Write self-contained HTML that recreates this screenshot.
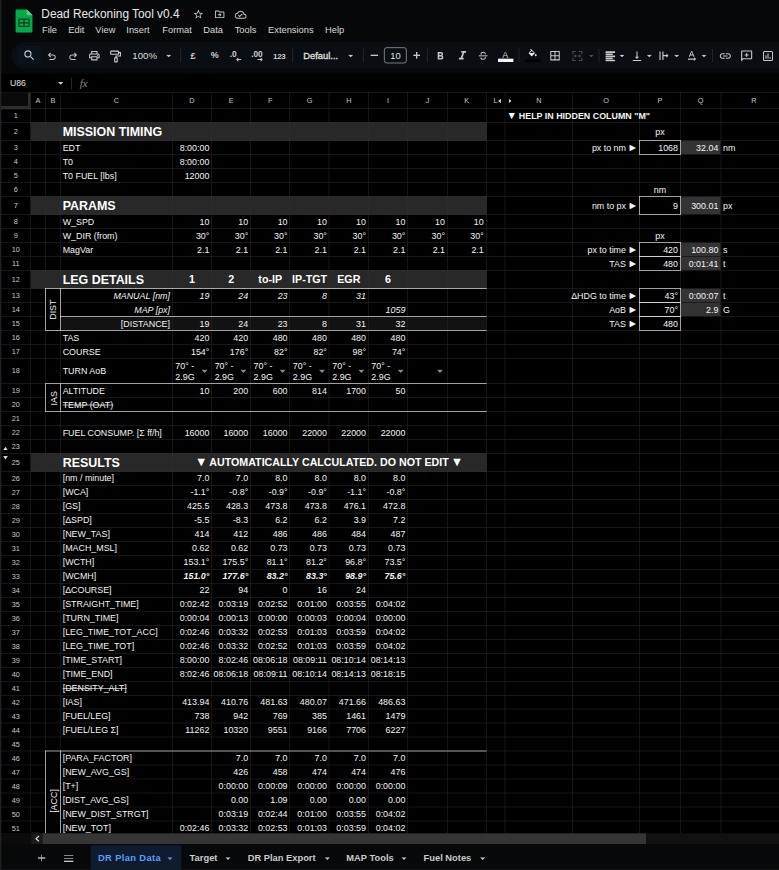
<!DOCTYPE html>
<html lang="en"><head><meta charset="utf-8"><title>Dead Reckoning Tool v0.4</title>
<style>
html,body{margin:0;padding:0;background:#000;}
body{width:779px;height:870px;overflow:hidden;position:relative;font-family:"Liberation Sans","DejaVu Sans",sans-serif;}
#page{position:absolute;left:0;top:0;width:1169px;height:1305px;transform:scale(0.6666667);transform-origin:0 0;background:#000;overflow:hidden;color:#f0f0f0;}
#page div,#page svg{position:absolute;box-sizing:border-box;}
#page span{white-space:nowrap;}
#top{left:0;top:0;width:1169px;height:111px;background:#060709;}
#pill{left:17px;top:63px;width:1200px;height:40px;background:#0a0d11;border-radius:20px 0 0 20px;}
#sbox{left:26px;top:69px;width:37px;height:27px;background:#0a121b;border-radius:3px;}
.t{color:#c9ccca;font-size:14px;line-height:20px;height:20px;}
.sep{width:1px;background:#2e3236;top:73px;height:20px;}
#title{left:62px;top:9.400px;font-size:17.800px;line-height:24px;color:#e6e8e7;}
.m{top:34.500px;font-size:14px;line-height:20px;color:#d6d9d7;}
#fbar{left:0;top:111px;width:1169px;height:27px;background:#000;}
#grid{left:0;top:0;width:1169px;height:1250px;overflow:hidden;}
.r{}
.c{display:flex;align-items:flex-end;padding:0 3px 1.700px 3px;font-size:13.333px;line-height:15px;color:#f3f3f3;overflow:visible;}
.c.ar{justify-content:flex-end;}
.c.al{justify-content:flex-start;}
.c.ac{justify-content:center;}
.c.mid{align-items:center;padding-bottom:0;}
.c.mid2{align-items:center;padding-bottom:0;padding-top:1px;}
.g{font-size:1.18em;line-height:0;margin-left:-1.500px;margin-right:-0.900px;}
.g2{font-size:1.2em;line-height:0;margin-left:-1.500px;margin-right:-1px;}
.c.big{font-size:18.667px;font-weight:bold;line-height:21px;padding-bottom:2px;color:#fff;}
.c.b12{font-size:16px;font-weight:bold;line-height:18px;padding-bottom:3px;color:#fff;}
.c.b{font-weight:bold;}
.c.i{font-style:italic;}
.c.bi{font-style:italic;font-weight:bold;}
.c.st span{text-decoration:line-through;}
.dd{font-size:13.333px;line-height:16.5px;color:#f3f3f3;padding:3px 0 0 4px;}
.ch{display:flex;align-items:center;justify-content:center;font-size:11px;color:#c8c8c8;}
.rh{left:1.100px;width:45px;display:flex;align-items:center;justify-content:center;font-size:11px;color:#c8c8c8;}
.rot{display:flex;align-items:center;justify-content:center;font-size:13.333px;color:#f3f3f3;}
.rot span{transform:rotate(-90deg);display:block;}
.abs{}
#hs{left:0;top:1250px;width:1169px;height:16px;background:#111;}
#bot{left:0;top:1266px;width:1169px;height:39px;background:#07080a;}
.tab{top:1277px;font-size:14px;line-height:20px;font-weight:bold;color:#c9ccca;}
#lb{left:0;top:0;width:1.5px;height:1305px;background:#222;}
#bb{left:0;top:1303.5px;width:1169px;height:1.5px;background:#1a1a1a;}

</style></head><body>
<div id="page">
<div id="top"></div>
<svg style="left:22.5px;top:13.5px" width="26" height="35" viewBox="0 0 26 35">
<path d="M2.5 0H17l9 9v23.5a2.5 2.5 0 0 1-2.500 2.500h-21A2.500 2.500 0 0 1 0 32.500v-30A2.500 2.500 0 0 1 2.500 0z" fill="#00ab48"/>
<path d="M17 0l9 9h-6.500A2.500 2.500 0 0 1 17 6.500z" fill="#57cf8a"/>
<rect x="4.500" y="14" width="17" height="12.500" fill="#04381c"/>
<rect x="6.300" y="15.800" width="5.700" height="3.600" fill="#00ab48"/><rect x="14" y="15.800" width="5.700" height="3.600" fill="#00ab48"/>
<rect x="6.300" y="21.200" width="5.700" height="3.600" fill="#00ab48"/><rect x="14" y="21.200" width="5.700" height="3.600" fill="#00ab48"/>
</svg>
<div id="title"><span>Dead Reckoning Tool v0.4</span></div>
<svg style="left:289.00px;top:13.00px" width="17" height="17" viewBox="0 0 24 24" ><path d="M22 9.240l-7.190-.62L12 2 9.190 8.630 2 9.240l5.460 4.730L5.820 21 12 17.270 18.180 21l-1.630-7.030L22 9.240zM12 15.400l-3.760 2.270 1-4.280-3.320-2.880 4.380-.38L12 6.100l1.710 4.040 4.380.38-3.320 2.880 1 4.280L12 15.400z" fill="#c6c9c7"/></svg>
<svg style="left:320.50px;top:12.50px" width="17" height="17" viewBox="0 0 24 24" ><path d="M20 6h-8l-2-2H4c-1.100 0-1.990.9-1.990 2L2 18c0 1.100.9 2 2 2h16c1.100 0 2-.9 2-2V8c0-1.100-.9-2-2-2zm0 12H4V6h5.170l2 2H20v10zm-8-1l4-4-4-4v3H8v2h4v3z" fill="#c6c9c7"/></svg>
<svg style="left:352.00px;top:12.50px" width="18" height="18" viewBox="0 0 24 24" ><path d="M19.350 10.040C18.670 6.590 15.640 4 12 4 9.110 4 6.600 5.640 5.350 8.040 2.340 8.360 0 10.910 0 14c0 3.310 2.690 6 6 6h13c2.760 0 5-2.240 5-5 0-2.640-2.050-4.780-4.650-4.960zM19 18H6c-2.210 0-4-1.790-4-4 0-2.050 1.530-3.760 3.560-3.970l1.070-.11.5-.95C8.080 7.140 9.940 6 12 6c2.620 0 4.880 1.860 5.390 4.430l.3 1.500 1.530.11c1.560.1 2.780 1.410 2.780 2.960 0 1.650-1.350 3-3 3zm-9-3.820l-2.090-2.090L6.500 13.500 10 17l6.010-6.010-1.410-1.410z" fill="#c6c9c7"/></svg>
<div class="m" style="left:63px"><span>File</span></div>
<div class="m" style="left:102.5px"><span>Edit</span></div>
<div class="m" style="left:143px"><span>View</span></div>
<div class="m" style="left:189.5px"><span>Insert</span></div>
<div class="m" style="left:243.5px"><span>Format</span></div>
<div class="m" style="left:305px"><span>Data</span></div>
<div class="m" style="left:352px"><span>Tools</span></div>
<div class="m" style="left:402px"><span>Extensions</span></div>
<div class="m" style="left:487.5px"><span>Help</span></div>
<div id="pill"></div><div id="sbox"></div>
<svg style="left:34.20px;top:73.30px" width="20" height="20" viewBox="0 0 24 24" ><path d="M15.5 14h-.79l-.28-.27A6.471 6.471 0 0 0 16 9.500 6.500 6.500 0 1 0 9.500 16c1.610 0 3.090-.59 4.230-1.570l.27.28v.79l5 4.990L20.490 19l-4.990-5zm-6 0C7.010 14 5 11.990 5 9.500S7.010 5 9.500 5 14 7.010 14 9.500 11.990 14 9.500 14z" fill="#c6c9c7"/></svg>
<svg style="left:69.25px;top:75.65px" width="17.5" height="17.5" viewBox="0 0 24 24" ><path d="M7 19v-2h7.100c1.050 0 1.960-.33 2.740-1 .77-.67 1.160-1.500 1.160-2.500s-.39-1.830-1.160-2.500c-.78-.67-1.690-1-2.740-1H7.800l2.600 2.600L9 14 4 9l5-5 1.400 1.400L7.800 8h6.300c1.620 0 3 .52 4.160 1.570C19.420 10.620 20 11.930 20 13.500s-.58 2.880-1.740 3.930C17.100 18.480 15.720 19 14.100 19H7z" fill="#c6c9c7"/></svg>
<svg style="left:100.75px;top:75.65px" width="17.5" height="17.5" viewBox="0 0 24 24" ><g transform="translate(24,0) scale(-1,1)"><path d="M7 19v-2h7.100c1.050 0 1.960-.33 2.740-1 .77-.67 1.160-1.500 1.160-2.500s-.39-1.830-1.160-2.500c-.78-.67-1.690-1-2.740-1H7.800l2.600 2.600L9 14 4 9l5-5 1.400 1.400L7.800 8h6.300c1.620 0 3 .52 4.160 1.570C19.420 10.620 20 11.930 20 13.500s-.58 2.880-1.740 3.930C17.100 18.480 15.720 19 14.100 19H7z" fill="#c6c9c7"/></g></svg>
<svg style="left:132.25px;top:73.50px" width="19" height="19" viewBox="0 0 24 24" ><path d="M19 8h-1V3H6v5H5c-1.660 0-3 1.340-3 3v6h4v4h12v-4h4v-6c0-1.660-1.340-3-3-3zM8 5h8v3H8V5zm8 14H8v-4h8v4zm2-4v-2H6v2H4v-4c0-.55.45-1 1-1h14c.55 0 1 .45 1 1v4h-2zm0-2.500a1 1 0 1 0 0-2 1 1 0 0 0 0 2z" fill="#c6c9c7"/></svg>
<svg style="left:162.500px;top:74px" width="21" height="21" viewBox="0 0 24 24" fill="none" stroke="#c6c9c7" stroke-width="1.900"><rect x="3.500" y="3" width="13.500" height="5.500" rx="0.800"/><path d="M17 5.700h3.200v5.800h-7.700v3.200"/><rect x="10.300" y="14.700" width="4.400" height="6.800" rx="0.600"/></svg>
<div class="t" style="left:198.50px;top:73.00px;font-size:14.500px;color:#dcdfdd;"><span>100%</span></div>
<svg style="left:249.00px;top:81.50px" width="8" height="4" viewBox="0 0 10 5"><path d="M0 0h10L5 5z" fill="#c6c9c7"/></svg>
<div class="sep" style="left:270.25px"></div>
<div class="t" style="left:285.80px;top:73.00px;font-weight:bold;font-size:14px;"><span>£</span></div>
<div class="t" style="left:316.30px;top:73.00px;font-weight:bold;font-size:13.5px;"><span>%</span></div>
<div class="t" style="left:344.50px;top:71.50px;font-size:12.500px;font-weight:bold;"><span>.0</span></div>
<svg style="left:353.500px;top:86px" width="8.500" height="6.500" viewBox="0 0 11 8"><path d="M11 3.100H3.600l1.900-1.900L4.300 0 0 4l4.300 4 1.200-1.200-1.900-1.900H11z" fill="#c6c9c7"/></svg>
<div class="t" style="left:377.00px;top:71.50px;font-size:12.500px;font-weight:bold;letter-spacing:-0.300px;"><span>.00</span></div>
<svg style="left:385.500px;top:86px" width="8.500" height="6.500" viewBox="0 0 11 8"><path d="M0 3.100h7.400L5.500 1.200 6.700 0 11 4 6.700 8 5.500 6.800l1.900-1.900H0z" fill="#c6c9c7"/></svg>
<div class="t" style="left:409.50px;top:73.50px;font-size:12px;font-weight:bold;letter-spacing:-0.4px;"><span>123</span></div>
<div class="sep" style="left:437.50px"></div>
<div class="t" style="left:455.00px;top:73.00px;font-size:14px;color:#e2e5e3;-webkit-text-stroke:0.400px #e2e5e3;"><span>Defaul...</span></div>
<svg style="left:521.50px;top:81.50px" width="8" height="4" viewBox="0 0 10 5"><path d="M0 0h10L5 5z" fill="#c6c9c7"/></svg>
<div class="sep" style="left:544.50px"></div>
<div style="left:556px;top:82.300px;width:10.500px;height:1.700px;background:#c6c9c7"></div>
<div style="left:576px;top:71px;width:34px;height:24px;border:1.300px solid #b4b7b5;border-radius:4px;"></div>
<div class="t" style="left:585.50px;top:73.00px;font-size:14px;color:#dfe2e0;"><span>10</span></div>
<div style="left:619.700px;top:82.300px;width:10.600px;height:1.700px;background:#c6c9c7"></div><div style="left:624.150px;top:77.800px;width:1.700px;height:10.600px;background:#c6c9c7"></div>
<div class="sep" style="left:640.50px"></div>
<svg style="left:651.00px;top:74.50px" width="19" height="19" viewBox="0 0 24 24" ><path d="M15.600 10.790c.97-.67 1.650-1.770 1.650-2.790 0-2.260-1.750-4-4-4H7v14h7.040c2.090 0 3.710-1.700 3.710-3.790 0-1.520-.86-2.820-2.150-3.420zM10 6.500h3c.83 0 1.500.67 1.500 1.500s-.67 1.500-1.500 1.500h-3v-3zm3.500 9H10v-3h3.500c.83 0 1.500.67 1.500 1.500s-.67 1.500-1.500 1.500z" fill="#c6c9c7"/></svg>
<svg style="left:682.75px;top:73.25px" width="21.5" height="21.5" viewBox="0 0 24 24" ><path d="M10 4v3h2.210l-3.420 8H6v3h8v-3h-2.210l3.420-8H18V4z" fill="#c6c9c7"/></svg>
<svg style="left:716.300px;top:75.300px" width="17.500" height="17.500" viewBox="0 0 24 24" fill="none" stroke="#c6c9c7" stroke-width="2.100"><path d="M3 12H21" stroke-width="2"/><path d="M16.500 8.600C16.500 6 14.800 4.800 12 4.800 9.200 4.800 7.600 6.100 7.600 7.900c0 .7.300 1.300.7 1.700"/><path d="M7.300 15.400C7.300 18 9.200 19.200 12 19.200c2.800 0 4.500-1.300 4.500-3.100 0-.7-.2-1.200-.6-1.700"/></svg>
<div class="t" style="left:753.30px;top:72.80px;font-size:13.500px;"><span>A</span></div>
<div style="left:747px;top:88px;width:23px;height:4.500px;background:#f5f5f5"></div>
<div class="sep" style="left:777.50px"></div>
<svg style="left:791.00px;top:72.50px" width="16" height="16" viewBox="0 0 24 24" ><path d="M16.560 8.940L7.620 0 6.210 1.410l2.380 2.380-5.150 5.150c-.59.59-.59 1.540 0 2.120l5.500 5.500c.29.29.68.44 1.060.44s.77-.15 1.060-.44l5.500-5.500c.59-.58.59-1.530 0-2.120zM5.210 10L10 5.210 14.790 10H5.210zM19 11.500s-2 2.170-2 3.500c0 1.100.9 2 2 2s2-.9 2-2c0-1.330-2-3.500-2-3.500z" fill="#e8eae9"/></svg>
<div style="left:788px;top:88.500px;width:23px;height:4.500px;background:#000"></div>
<svg style="left:823.00px;top:74.00px" width="19" height="19" viewBox="0 0 24 24" ><path d="M3 3v18h18V3H3zm8 16H5v-6h6v6zm0-8H5V5h6v6zm8 8h-6v-6h6v6zm0-8h-6V5h6v6z" fill="#c6c9c7"/></svg>
<svg style="left:855.50px;top:73.50px" width="20" height="20" viewBox="0 0 24 24" ><path d="M3 3h6v2H5v4H3V3zm18 0v6h-2V5h-4V3h6zM3 15h2v4h4v2H3v-6zm16 0h2v6h-6v-2h4v-4zM4.500 11.100h3.300V8.800L11.300 12l-3.500 3.200v-2.300H4.500zM19.500 11.100h-3.300V8.800L12.700 12l3.500 3.200v-2.300h3.300z" fill="#4a4d50"/></svg>
<svg style="left:882.50px;top:81.50px" width="8" height="4" viewBox="0 0 10 5"><path d="M0 0h10L5 5z" fill="#4a4d50"/></svg>
<div class="sep" style="left:897.50px"></div>
<svg style="left:905.50px;top:74.50px" width="19" height="19" viewBox="0 0 24 24" ><path d="M3 2.600h18v2.900H3zM3 6.600h13.500v2.900H3zM3 10.600h18v2.900H3zM3 14.600h13.500v2.900H3zM3 18.600h18v2.900H3z" fill="#c6c9c7"/></svg>
<svg style="left:929.00px;top:81.50px" width="8" height="4" viewBox="0 0 10 5"><path d="M0 0h10L5 5z" fill="#c6c9c7"/></svg>
<svg style="left:946.00px;top:74.50px" width="19" height="19" viewBox="0 0 24 24" ><path d="M16 13h-3V3h-2v10H8l4 4 4-4zM4 19v2h16v-2H4z" fill="#c6c9c7"/></svg>
<svg style="left:969.50px;top:81.50px" width="8" height="4" viewBox="0 0 10 5"><path d="M0 0h10L5 5z" fill="#c6c9c7"/></svg>
<svg style="left:986.00px;top:74.00px" width="19" height="19" viewBox="0 0 24 24" ><path d="M4 4h2.200v16H4V4zm5.500 0h2.200v6.900h5.500V8l4 4-4 4v-2.900h-5.500V20H9.500V4z" fill="#c6c9c7"/></svg>
<svg style="left:1010.50px;top:81.50px" width="8" height="4" viewBox="0 0 10 5"><path d="M0 0h10L5 5z" fill="#c6c9c7"/></svg>
<svg style="left:1028.00px;top:74.00px" width="19" height="19" viewBox="0 0 24 24" ><path d="M12.750 3h-1.500L6.500 14h2.100l.9-2.200h5l.9 2.200h2.100L12.750 3zm-2.620 7L12 4.980 13.870 10h-3.740zM5 17.500h11.500V15l4 3.500-4 3.500v-2.500H5v-2z" fill="#c6c9c7"/></svg>
<svg style="left:1051.70px;top:81.50px" width="8" height="4" viewBox="0 0 10 5"><path d="M0 0h10L5 5z" fill="#c6c9c7"/></svg>
<div class="sep" style="left:1068.10px"></div>
<svg style="left:1077.50px;top:74.00px" width="20" height="20" viewBox="0 0 24 24" ><path d="M3.900 12c0-1.710 1.390-3.100 3.100-3.100h4V7H7c-2.760 0-5 2.240-5 5s2.240 5 5 5h4v-1.900H7c-1.710 0-3.100-1.390-3.100-3.100zM8 13h8v-2H8v2zm9-6h-4v1.900h4c1.710 0 3.100 1.390 3.100 3.100s-1.390 3.100-3.100 3.100h-4V17h4c2.760 0 5-2.240 5-5s-2.240-5-5-5z" fill="#c6c9c7"/></svg>
<svg style="left:1109.50px;top:73.50px" width="20" height="20" viewBox="0 0 24 24" ><path d="M2 4c0-1.100.9-2 2-2h16c1.100 0 2 .9 2 2v12c0 1.100-.9 2-2 2H6l-4 4V4zm2 13.170L5.170 16H20V4H4v13.170zM11.100 6.400h1.800v2.700h2.700v1.800h-2.700v2.700h-1.800v-2.700H8.400V9.100h2.700z" fill="#c6c9c7"/></svg>
<svg style="left:1141.500px;top:73.500px" width="20" height="20" viewBox="0 0 24 24"><rect x="3.900" y="3.900" width="16.200" height="16.200" rx="2" fill="none" stroke="#c6c9c7" stroke-width="1.900"/><path d="M7.400 10.500h1.900V17H7.400zM11.100 7h1.900v10h-1.900zM14.900 13.800h1.900V17h-1.900z" fill="#c6c9c7"/></svg>
<div id="fbar"></div>
<div class="t" style="left:15.00px;top:114.50px;font-size:13px;color:#e3e3e3;"><span>U86</span></div>
<svg style="left:86.75px;top:122.50px" width="8" height="4" viewBox="0 0 10 5"><path d="M0 0h10L5 5z" fill="#d0d0d0"/></svg>
<div style="left:106.5px;top:117px;width:1.200px;height:17px;background:#3a3a3a"></div>
<div class="t" style="left:119.50px;top:114.50px;font-size:16.500px;font-style:italic;font-family:'Liberation Serif',serif;color:#8a8a8a;"><span>fx</span></div>
<div id="grid">
<div class="r" style="left:46.00px;top:183.00px;width:683.60px;height:28.00px;background:#282828;"></div>
<div class="r" style="left:46.00px;top:294.00px;width:683.60px;height:28.00px;background:#282828;"></div>
<div class="r" style="left:46.00px;top:405.00px;width:683.60px;height:28.00px;background:#282828;"></div>
<div class="r" style="left:46.00px;top:680.00px;width:683.60px;height:28.00px;background:#282828;"></div>
<div class="r" style="left:91.00px;top:475.00px;width:637.60px;height:20.00px;background:#121212;"></div>
<div class="r" style="left:1021.00px;top:211.00px;width:59.50px;height:20.00px;background:#333333;"></div>
<div class="r" style="left:1021.00px;top:295.00px;width:59.50px;height:26.00px;background:#333333;"></div>
<div class="r" style="left:1021.00px;top:364.00px;width:59.50px;height:20.00px;background:#333333;"></div>
<div class="r" style="left:1021.00px;top:385.00px;width:59.50px;height:20.00px;background:#333333;"></div>
<div class="r" style="left:1021.00px;top:433.00px;width:59.50px;height:20.00px;background:#333333;"></div>
<div class="r" style="left:1021.00px;top:454.00px;width:59.50px;height:20.00px;background:#333333;"></div>
<div class="r" style="left:0.00px;top:183.00px;width:1169.00px;height:1.00px;background:#222222;"></div>
<div class="r" style="left:0.00px;top:210.00px;width:1169.00px;height:1.00px;background:#222222;"></div>
<div class="r" style="left:0.00px;top:231.00px;width:1169.00px;height:1.00px;background:#222222;"></div>
<div class="r" style="left:0.00px;top:252.00px;width:1169.00px;height:1.00px;background:#222222;"></div>
<div class="r" style="left:0.00px;top:273.00px;width:1169.00px;height:1.00px;background:#222222;"></div>
<div class="r" style="left:0.00px;top:294.00px;width:1169.00px;height:1.00px;background:#222222;"></div>
<div class="r" style="left:0.00px;top:321.00px;width:1169.00px;height:1.00px;background:#222222;"></div>
<div class="r" style="left:0.00px;top:342.00px;width:1169.00px;height:1.00px;background:#222222;"></div>
<div class="r" style="left:0.00px;top:363.00px;width:1169.00px;height:1.00px;background:#222222;"></div>
<div class="r" style="left:0.00px;top:384.00px;width:1169.00px;height:1.00px;background:#222222;"></div>
<div class="r" style="left:0.00px;top:405.00px;width:1169.00px;height:1.00px;background:#222222;"></div>
<div class="r" style="left:0.00px;top:432.00px;width:1169.00px;height:1.00px;background:#222222;"></div>
<div class="r" style="left:0.00px;top:453.00px;width:1169.00px;height:1.00px;background:#222222;"></div>
<div class="r" style="left:0.00px;top:474.00px;width:1169.00px;height:1.00px;background:#222222;"></div>
<div class="r" style="left:0.00px;top:495.00px;width:1169.00px;height:1.00px;background:#222222;"></div>
<div class="r" style="left:0.00px;top:516.00px;width:1169.00px;height:1.00px;background:#222222;"></div>
<div class="r" style="left:0.00px;top:537.00px;width:1169.00px;height:1.00px;background:#222222;"></div>
<div class="r" style="left:0.00px;top:575.00px;width:1169.00px;height:1.00px;background:#222222;"></div>
<div class="r" style="left:0.00px;top:596.00px;width:1169.00px;height:1.00px;background:#222222;"></div>
<div class="r" style="left:0.00px;top:617.00px;width:1169.00px;height:1.00px;background:#222222;"></div>
<div class="r" style="left:0.00px;top:638.00px;width:1169.00px;height:1.00px;background:#222222;"></div>
<div class="r" style="left:0.00px;top:659.00px;width:1169.00px;height:1.00px;background:#222222;"></div>
<div class="r" style="left:0.00px;top:680.00px;width:1169.00px;height:1.00px;background:#222222;"></div>
<div class="r" style="left:0.00px;top:707.00px;width:1169.00px;height:1.00px;background:#222222;"></div>
<div class="r" style="left:0.00px;top:727.97px;width:1169.00px;height:1.00px;background:#222222;"></div>
<div class="r" style="left:0.00px;top:748.94px;width:1169.00px;height:1.00px;background:#222222;"></div>
<div class="r" style="left:0.00px;top:769.91px;width:1169.00px;height:1.00px;background:#222222;"></div>
<div class="r" style="left:0.00px;top:790.88px;width:1169.00px;height:1.00px;background:#222222;"></div>
<div class="r" style="left:0.00px;top:811.85px;width:1169.00px;height:1.00px;background:#222222;"></div>
<div class="r" style="left:0.00px;top:832.82px;width:1169.00px;height:1.00px;background:#222222;"></div>
<div class="r" style="left:0.00px;top:853.79px;width:1169.00px;height:1.00px;background:#222222;"></div>
<div class="r" style="left:0.00px;top:874.76px;width:1169.00px;height:1.00px;background:#222222;"></div>
<div class="r" style="left:0.00px;top:895.73px;width:1169.00px;height:1.00px;background:#222222;"></div>
<div class="r" style="left:0.00px;top:916.70px;width:1169.00px;height:1.00px;background:#222222;"></div>
<div class="r" style="left:0.00px;top:937.67px;width:1169.00px;height:1.00px;background:#222222;"></div>
<div class="r" style="left:0.00px;top:958.64px;width:1169.00px;height:1.00px;background:#222222;"></div>
<div class="r" style="left:0.00px;top:979.61px;width:1169.00px;height:1.00px;background:#222222;"></div>
<div class="r" style="left:0.00px;top:1000.58px;width:1169.00px;height:1.00px;background:#222222;"></div>
<div class="r" style="left:0.00px;top:1021.55px;width:1169.00px;height:1.00px;background:#222222;"></div>
<div class="r" style="left:0.00px;top:1042.52px;width:1169.00px;height:1.00px;background:#222222;"></div>
<div class="r" style="left:0.00px;top:1063.49px;width:1169.00px;height:1.00px;background:#222222;"></div>
<div class="r" style="left:0.00px;top:1084.46px;width:1169.00px;height:1.00px;background:#222222;"></div>
<div class="r" style="left:0.00px;top:1105.43px;width:1169.00px;height:1.00px;background:#222222;"></div>
<div class="r" style="left:0.00px;top:1126.40px;width:1169.00px;height:1.00px;background:#222222;"></div>
<div class="r" style="left:0.00px;top:1147.37px;width:1169.00px;height:1.00px;background:#222222;"></div>
<div class="r" style="left:0.00px;top:1168.34px;width:1169.00px;height:1.00px;background:#222222;"></div>
<div class="r" style="left:0.00px;top:1189.31px;width:1169.00px;height:1.00px;background:#222222;"></div>
<div class="r" style="left:0.00px;top:1210.28px;width:1169.00px;height:1.00px;background:#222222;"></div>
<div class="r" style="left:0.00px;top:1231.25px;width:1169.00px;height:1.00px;background:#222222;"></div>
<div class="r" style="left:0.00px;top:138.00px;width:1169.00px;height:1.00px;background:#222222;"></div>
<div class="r" style="left:0.00px;top:162.00px;width:1169.00px;height:1.00px;background:#222222;"></div>
<div class="r" style="left:45.00px;top:138.00px;width:1.00px;height:1112.00px;background:#222222;"></div>
<div class="r" style="left:68.00px;top:138.00px;width:1.00px;height:1112.00px;background:#222222;"></div>
<div class="r" style="left:90.00px;top:138.00px;width:1.00px;height:1112.00px;background:#222222;"></div>
<div class="r" style="left:258.00px;top:138.00px;width:1.00px;height:1112.00px;background:#222222;"></div>
<div class="r" style="left:317.00px;top:138.00px;width:1.00px;height:1112.00px;background:#222222;"></div>
<div class="r" style="left:375.30px;top:138.00px;width:1.00px;height:1112.00px;background:#222222;"></div>
<div class="r" style="left:434.30px;top:138.00px;width:1.00px;height:1112.00px;background:#222222;"></div>
<div class="r" style="left:493.40px;top:138.00px;width:1.00px;height:1112.00px;background:#222222;"></div>
<div class="r" style="left:552.00px;top:138.00px;width:1.00px;height:1112.00px;background:#222222;"></div>
<div class="r" style="left:611.00px;top:138.00px;width:1.00px;height:1112.00px;background:#222222;"></div>
<div class="r" style="left:670.50px;top:138.00px;width:1.00px;height:1112.00px;background:#222222;"></div>
<div class="r" style="left:728.60px;top:138.00px;width:1.00px;height:1112.00px;background:#222222;"></div>
<div class="r" style="left:757.40px;top:138.00px;width:1.00px;height:1112.00px;background:#222222;"></div>
<div class="r" style="left:858.00px;top:138.00px;width:1.00px;height:1112.00px;background:#222222;"></div>
<div class="r" style="left:959.00px;top:138.00px;width:1.00px;height:1112.00px;background:#222222;"></div>
<div class="r" style="left:1020.00px;top:138.00px;width:1.00px;height:1112.00px;background:#222222;"></div>
<div class="r" style="left:1080.50px;top:138.00px;width:1.00px;height:1112.00px;background:#222222;"></div>
<div class="r" style="left:46.00px;top:183.00px;width:683.60px;height:1.00px;background:#313131;"></div>
<div class="r" style="left:46.00px;top:210.00px;width:683.60px;height:1.00px;background:#313131;"></div>
<div class="r" style="left:68.00px;top:183.00px;width:1.00px;height:28.00px;background:#313131;"></div>
<div class="r" style="left:90.00px;top:183.00px;width:1.00px;height:28.00px;background:#313131;"></div>
<div class="r" style="left:258.00px;top:183.00px;width:1.00px;height:28.00px;background:#313131;"></div>
<div class="r" style="left:317.00px;top:183.00px;width:1.00px;height:28.00px;background:#313131;"></div>
<div class="r" style="left:375.30px;top:183.00px;width:1.00px;height:28.00px;background:#313131;"></div>
<div class="r" style="left:434.30px;top:183.00px;width:1.00px;height:28.00px;background:#313131;"></div>
<div class="r" style="left:493.40px;top:183.00px;width:1.00px;height:28.00px;background:#313131;"></div>
<div class="r" style="left:552.00px;top:183.00px;width:1.00px;height:28.00px;background:#313131;"></div>
<div class="r" style="left:611.00px;top:183.00px;width:1.00px;height:28.00px;background:#313131;"></div>
<div class="r" style="left:670.50px;top:183.00px;width:1.00px;height:28.00px;background:#313131;"></div>
<div class="r" style="left:728.60px;top:183.00px;width:1.00px;height:28.00px;background:#313131;"></div>
<div class="r" style="left:46.00px;top:294.00px;width:683.60px;height:1.00px;background:#313131;"></div>
<div class="r" style="left:46.00px;top:321.00px;width:683.60px;height:1.00px;background:#313131;"></div>
<div class="r" style="left:68.00px;top:294.00px;width:1.00px;height:28.00px;background:#313131;"></div>
<div class="r" style="left:90.00px;top:294.00px;width:1.00px;height:28.00px;background:#313131;"></div>
<div class="r" style="left:258.00px;top:294.00px;width:1.00px;height:28.00px;background:#313131;"></div>
<div class="r" style="left:317.00px;top:294.00px;width:1.00px;height:28.00px;background:#313131;"></div>
<div class="r" style="left:375.30px;top:294.00px;width:1.00px;height:28.00px;background:#313131;"></div>
<div class="r" style="left:434.30px;top:294.00px;width:1.00px;height:28.00px;background:#313131;"></div>
<div class="r" style="left:493.40px;top:294.00px;width:1.00px;height:28.00px;background:#313131;"></div>
<div class="r" style="left:552.00px;top:294.00px;width:1.00px;height:28.00px;background:#313131;"></div>
<div class="r" style="left:611.00px;top:294.00px;width:1.00px;height:28.00px;background:#313131;"></div>
<div class="r" style="left:670.50px;top:294.00px;width:1.00px;height:28.00px;background:#313131;"></div>
<div class="r" style="left:728.60px;top:294.00px;width:1.00px;height:28.00px;background:#313131;"></div>
<div class="r" style="left:46.00px;top:405.00px;width:683.60px;height:1.00px;background:#313131;"></div>
<div class="r" style="left:46.00px;top:432.00px;width:683.60px;height:1.00px;background:#313131;"></div>
<div class="r" style="left:68.00px;top:405.00px;width:1.00px;height:28.00px;background:#313131;"></div>
<div class="r" style="left:90.00px;top:405.00px;width:1.00px;height:28.00px;background:#313131;"></div>
<div class="r" style="left:258.00px;top:405.00px;width:1.00px;height:28.00px;background:#313131;"></div>
<div class="r" style="left:317.00px;top:405.00px;width:1.00px;height:28.00px;background:#313131;"></div>
<div class="r" style="left:375.30px;top:405.00px;width:1.00px;height:28.00px;background:#313131;"></div>
<div class="r" style="left:434.30px;top:405.00px;width:1.00px;height:28.00px;background:#313131;"></div>
<div class="r" style="left:493.40px;top:405.00px;width:1.00px;height:28.00px;background:#313131;"></div>
<div class="r" style="left:552.00px;top:405.00px;width:1.00px;height:28.00px;background:#313131;"></div>
<div class="r" style="left:611.00px;top:405.00px;width:1.00px;height:28.00px;background:#313131;"></div>
<div class="r" style="left:670.50px;top:405.00px;width:1.00px;height:28.00px;background:#313131;"></div>
<div class="r" style="left:728.60px;top:405.00px;width:1.00px;height:28.00px;background:#313131;"></div>
<div class="r" style="left:46.00px;top:680.00px;width:683.60px;height:1.00px;background:#313131;"></div>
<div class="r" style="left:46.00px;top:707.00px;width:683.60px;height:1.00px;background:#313131;"></div>
<div class="r" style="left:68.00px;top:680.00px;width:1.00px;height:28.00px;background:#313131;"></div>
<div class="r" style="left:90.00px;top:680.00px;width:1.00px;height:28.00px;background:#313131;"></div>
<div class="r" style="left:258.00px;top:680.00px;width:1.00px;height:28.00px;background:#313131;"></div>
<div class="r" style="left:728.60px;top:680.00px;width:1.00px;height:28.00px;background:#313131;"></div>
<div class="r" style="left:0.00px;top:139.00px;width:46.00px;height:24.00px;background:#07090b;"></div>
<div class="r" style="left:42.00px;top:139.00px;width:4.00px;height:25.00px;background:#2d2d2d;"></div>
<div class="r" style="left:0.00px;top:159.00px;width:46.00px;height:5.00px;background:#2d2d2d;"></div>
<div class="ch" style="left:46.00px;top:139.7px;width:22.00px;height:23px"><span>A</span></div>
<div class="ch" style="left:69.00px;top:139.7px;width:21.00px;height:23px"><span>B</span></div>
<div class="ch" style="left:91.00px;top:139.7px;width:167.00px;height:23px"><span>C</span></div>
<div class="ch" style="left:259.00px;top:139.7px;width:58.00px;height:23px"><span>D</span></div>
<div class="ch" style="left:318.00px;top:139.7px;width:57.30px;height:23px"><span>E</span></div>
<div class="ch" style="left:376.30px;top:139.7px;width:58.00px;height:23px"><span>F</span></div>
<div class="ch" style="left:435.30px;top:139.7px;width:58.10px;height:23px"><span>G</span></div>
<div class="ch" style="left:494.40px;top:139.7px;width:57.60px;height:23px"><span>H</span></div>
<div class="ch" style="left:553.00px;top:139.7px;width:58.00px;height:23px"><span>I</span></div>
<div class="ch" style="left:612.00px;top:139.7px;width:58.50px;height:23px"><span>J</span></div>
<div class="ch" style="left:671.50px;top:139.7px;width:57.10px;height:23px"><span>K</span></div>
<div class="ch" style="left:733.20px;top:139.7px;width:20px;height:23px"><span>L</span></div>
<svg class="abs" style="left:747.30px;top:148.2px" width="4.600" height="7" viewBox="0 0 4.600 7"><path d="M4.600 0v7L0 3.500z" fill="#d0d0d0"/></svg>
<svg class="abs" style="left:762.60px;top:148.2px" width="4.600" height="7" viewBox="0 0 4.600 7"><path d="M0 0v7L4.600 3.500z" fill="#d0d0d0"/></svg>
<div class="ch" style="left:758.40px;top:139.7px;width:99.60px;height:23px"><span>N</span></div>
<div class="ch" style="left:859.00px;top:139.7px;width:100.00px;height:23px"><span>O</span></div>
<div class="ch" style="left:960.00px;top:139.7px;width:60.00px;height:23px"><span>P</span></div>
<div class="ch" style="left:1021.00px;top:139.7px;width:59.50px;height:23px"><span>Q</span></div>
<div class="ch" style="left:1081.50px;top:139.7px;width:98.50px;height:23px"><span>R</span></div>
<div class="rh" style="top:162.50px;height:20.00px"><span>1</span></div>
<div class="rh" style="top:183.50px;height:26.00px"><span>2</span></div>
<div class="rh" style="top:210.50px;height:20.00px"><span>3</span></div>
<div class="rh" style="top:231.50px;height:20.00px"><span>4</span></div>
<div class="rh" style="top:252.50px;height:20.00px"><span>5</span></div>
<div class="rh" style="top:273.50px;height:20.00px"><span>6</span></div>
<div class="rh" style="top:294.50px;height:26.00px"><span>7</span></div>
<div class="rh" style="top:321.50px;height:20.00px"><span>8</span></div>
<div class="rh" style="top:342.50px;height:20.00px"><span>9</span></div>
<div class="rh" style="top:363.50px;height:20.00px"><span>10</span></div>
<div class="rh" style="top:384.50px;height:20.00px"><span>11</span></div>
<div class="rh" style="top:405.50px;height:26.00px"><span>12</span></div>
<div class="rh" style="top:432.50px;height:20.00px"><span>13</span></div>
<div class="rh" style="top:453.50px;height:20.00px"><span>14</span></div>
<div class="rh" style="top:474.50px;height:20.00px"><span>15</span></div>
<div class="rh" style="top:495.50px;height:20.00px"><span>16</span></div>
<div class="rh" style="top:516.50px;height:20.00px"><span>17</span></div>
<div class="rh" style="top:536.40px;height:37.00px"><span>18</span></div>
<div class="rh" style="top:575.50px;height:20.00px"><span>19</span></div>
<div class="rh" style="top:596.50px;height:20.00px"><span>20</span></div>
<div class="rh" style="top:617.50px;height:20.00px"><span>21</span></div>
<div class="rh" style="top:638.50px;height:20.00px"><span>22</span></div>
<div class="rh" style="top:659.50px;height:20.00px"><span>23</span></div>
<div class="rh" style="top:680.50px;height:26.00px"><span>25</span></div>
<div class="rh" style="top:707.50px;height:19.97px"><span>26</span></div>
<div class="rh" style="top:728.47px;height:19.97px"><span>27</span></div>
<div class="rh" style="top:749.44px;height:19.97px"><span>28</span></div>
<div class="rh" style="top:770.41px;height:19.97px"><span>29</span></div>
<div class="rh" style="top:791.38px;height:19.97px"><span>30</span></div>
<div class="rh" style="top:812.35px;height:19.97px"><span>31</span></div>
<div class="rh" style="top:833.32px;height:19.97px"><span>32</span></div>
<div class="rh" style="top:854.29px;height:19.97px"><span>33</span></div>
<div class="rh" style="top:875.26px;height:19.97px"><span>34</span></div>
<div class="rh" style="top:896.23px;height:19.97px"><span>35</span></div>
<div class="rh" style="top:917.20px;height:19.97px"><span>36</span></div>
<div class="rh" style="top:938.17px;height:19.97px"><span>37</span></div>
<div class="rh" style="top:959.14px;height:19.97px"><span>38</span></div>
<div class="rh" style="top:980.11px;height:19.97px"><span>39</span></div>
<div class="rh" style="top:1001.08px;height:19.97px"><span>40</span></div>
<div class="rh" style="top:1022.05px;height:19.97px"><span>41</span></div>
<div class="rh" style="top:1043.02px;height:19.97px"><span>42</span></div>
<div class="rh" style="top:1063.99px;height:19.97px"><span>43</span></div>
<div class="rh" style="top:1084.96px;height:19.97px"><span>44</span></div>
<div class="rh" style="top:1105.93px;height:19.97px"><span>45</span></div>
<div class="rh" style="top:1126.90px;height:19.97px"><span>46</span></div>
<div class="rh" style="top:1147.87px;height:19.97px"><span>47</span></div>
<div class="rh" style="top:1168.84px;height:19.97px"><span>48</span></div>
<div class="rh" style="top:1189.81px;height:19.97px"><span>49</span></div>
<div class="rh" style="top:1210.78px;height:19.97px"><span>50</span></div>
<div class="rh" style="top:1231.75px;height:19.97px"><span>51</span></div>
<svg class="abs" style="left:3.600px;top:669.5px" width="8.400" height="5.300" viewBox="0 0 8 6"><path d="M0 6h8L4 0z" fill="#d8d8d8"/></svg>
<svg class="abs" style="left:3.600px;top:684.4px" width="8.400" height="5.300" viewBox="0 0 8 6"><path d="M0 0h8L4 6z" fill="#d8d8d8"/></svg>
<div class="c al big" style="left:91.00px;top:184.00px;width:284.30px;height:26.00px;"><span>MISSION TIMING</span></div>
<div class="c al big" style="left:91.00px;top:295.00px;width:284.30px;height:26.00px;"><span>PARAMS</span></div>
<div class="c al big" style="left:91.00px;top:406.00px;width:167.00px;height:26.00px;"><span>LEG DETAILS</span></div>
<div class="c al big" style="left:91.00px;top:681.00px;width:167.00px;height:26.00px;"><span>RESULTS</span></div>
<div class="c ac b12" style="left:259.00px;top:681.00px;width:469.60px;height:26.00px;padding-bottom:4.200px;"><span><span class="g">▼</span> AUTOMATICALLY CALCULATED. DO NOT EDIT <span class="g">▼</span></span></div>
<div class="c ac b12" style="left:259.00px;top:406.00px;width:58.00px;height:26.00px;"><span>1</span></div>
<div class="c ac b12" style="left:318.00px;top:406.00px;width:57.30px;height:26.00px;"><span>2</span></div>
<div class="c ac b12" style="left:376.30px;top:406.00px;width:58.00px;height:26.00px;"><span>to-IP</span></div>
<div class="c ac b12" style="left:435.30px;top:406.00px;width:58.10px;height:26.00px;"><span>IP-TGT</span></div>
<div class="c ac b12" style="left:494.40px;top:406.00px;width:57.60px;height:26.00px;"><span>EGR</span></div>
<div class="c ac b12" style="left:553.00px;top:406.00px;width:58.00px;height:26.00px;"><span>6</span></div>
<div class="c al " style="left:91.00px;top:211.00px;width:167.00px;height:20.00px;"><span>EDT</span></div>
<div class="c ar " style="left:259.00px;top:211.00px;width:58.00px;height:20.00px;"><span>8:00:00</span></div>
<div class="c al " style="left:91.00px;top:232.00px;width:167.00px;height:20.00px;"><span>T0</span></div>
<div class="c ar " style="left:259.00px;top:232.00px;width:58.00px;height:20.00px;"><span>8:00:00</span></div>
<div class="c al " style="left:91.00px;top:253.00px;width:167.00px;height:20.00px;"><span>T0 FUEL [lbs]</span></div>
<div class="c ar " style="left:259.00px;top:253.00px;width:58.00px;height:20.00px;"><span>12000</span></div>
<div class="c al " style="left:91.00px;top:322.00px;width:167.00px;height:20.00px;"><span>W_SPD</span></div>
<div class="c ar " style="left:259.00px;top:322.00px;width:58.00px;height:20.00px;"><span>10</span></div>
<div class="c ar " style="left:318.00px;top:322.00px;width:57.30px;height:20.00px;"><span>10</span></div>
<div class="c ar " style="left:376.30px;top:322.00px;width:58.00px;height:20.00px;"><span>10</span></div>
<div class="c ar " style="left:435.30px;top:322.00px;width:58.10px;height:20.00px;"><span>10</span></div>
<div class="c ar " style="left:494.40px;top:322.00px;width:57.60px;height:20.00px;"><span>10</span></div>
<div class="c ar " style="left:553.00px;top:322.00px;width:58.00px;height:20.00px;"><span>10</span></div>
<div class="c ar " style="left:612.00px;top:322.00px;width:58.50px;height:20.00px;"><span>10</span></div>
<div class="c ar " style="left:671.50px;top:322.00px;width:57.10px;height:20.00px;"><span>10</span></div>
<div class="c al " style="left:91.00px;top:343.00px;width:167.00px;height:20.00px;"><span>W_DIR (from)</span></div>
<div class="c ar " style="left:259.00px;top:343.00px;width:58.00px;height:20.00px;"><span>30°</span></div>
<div class="c ar " style="left:318.00px;top:343.00px;width:57.30px;height:20.00px;"><span>30°</span></div>
<div class="c ar " style="left:376.30px;top:343.00px;width:58.00px;height:20.00px;"><span>30°</span></div>
<div class="c ar " style="left:435.30px;top:343.00px;width:58.10px;height:20.00px;"><span>30°</span></div>
<div class="c ar " style="left:494.40px;top:343.00px;width:57.60px;height:20.00px;"><span>30°</span></div>
<div class="c ar " style="left:553.00px;top:343.00px;width:58.00px;height:20.00px;"><span>30°</span></div>
<div class="c ar " style="left:612.00px;top:343.00px;width:58.50px;height:20.00px;"><span>30°</span></div>
<div class="c ar " style="left:671.50px;top:343.00px;width:57.10px;height:20.00px;"><span>30°</span></div>
<div class="c al " style="left:91.00px;top:364.00px;width:167.00px;height:20.00px;"><span>MagVar</span></div>
<div class="c ar " style="left:259.00px;top:364.00px;width:58.00px;height:20.00px;"><span>2.1</span></div>
<div class="c ar " style="left:318.00px;top:364.00px;width:57.30px;height:20.00px;"><span>2.1</span></div>
<div class="c ar " style="left:376.30px;top:364.00px;width:58.00px;height:20.00px;"><span>2.1</span></div>
<div class="c ar " style="left:435.30px;top:364.00px;width:58.10px;height:20.00px;"><span>2.1</span></div>
<div class="c ar " style="left:494.40px;top:364.00px;width:57.60px;height:20.00px;"><span>2.1</span></div>
<div class="c ar " style="left:553.00px;top:364.00px;width:58.00px;height:20.00px;"><span>2.1</span></div>
<div class="c ar " style="left:612.00px;top:364.00px;width:58.50px;height:20.00px;"><span>2.1</span></div>
<div class="c ar " style="left:671.50px;top:364.00px;width:57.10px;height:20.00px;"><span>2.1</span></div>
<div class="c ar i" style="left:91.00px;top:433.00px;width:167.00px;height:20.00px;"><span>MANUAL [nm]</span></div>
<div class="c ar i" style="left:259.00px;top:433.00px;width:58.00px;height:20.00px;"><span>19</span></div>
<div class="c ar i" style="left:318.00px;top:433.00px;width:57.30px;height:20.00px;"><span>24</span></div>
<div class="c ar i" style="left:376.30px;top:433.00px;width:58.00px;height:20.00px;"><span>23</span></div>
<div class="c ar i" style="left:435.30px;top:433.00px;width:58.10px;height:20.00px;"><span>8</span></div>
<div class="c ar i" style="left:494.40px;top:433.00px;width:57.60px;height:20.00px;"><span>31</span></div>
<div class="c ar i" style="left:91.00px;top:454.00px;width:167.00px;height:20.00px;"><span>MAP [px]</span></div>
<div class="c ar i" style="left:553.00px;top:454.00px;width:58.00px;height:20.00px;"><span>1059</span></div>
<div class="c ar " style="left:91.00px;top:475.00px;width:167.00px;height:20.00px;"><span>[DISTANCE]</span></div>
<div class="c ar " style="left:259.00px;top:475.00px;width:58.00px;height:20.00px;"><span>19</span></div>
<div class="c ar " style="left:318.00px;top:475.00px;width:57.30px;height:20.00px;"><span>24</span></div>
<div class="c ar " style="left:376.30px;top:475.00px;width:58.00px;height:20.00px;"><span>23</span></div>
<div class="c ar " style="left:435.30px;top:475.00px;width:58.10px;height:20.00px;"><span>8</span></div>
<div class="c ar " style="left:494.40px;top:475.00px;width:57.60px;height:20.00px;"><span>31</span></div>
<div class="c ar " style="left:553.00px;top:475.00px;width:58.00px;height:20.00px;"><span>32</span></div>
<div class="c al " style="left:91.00px;top:496.00px;width:167.00px;height:20.00px;"><span>TAS</span></div>
<div class="c ar " style="left:259.00px;top:496.00px;width:58.00px;height:20.00px;"><span>420</span></div>
<div class="c ar " style="left:318.00px;top:496.00px;width:57.30px;height:20.00px;"><span>420</span></div>
<div class="c ar " style="left:376.30px;top:496.00px;width:58.00px;height:20.00px;"><span>480</span></div>
<div class="c ar " style="left:435.30px;top:496.00px;width:58.10px;height:20.00px;"><span>480</span></div>
<div class="c ar " style="left:494.40px;top:496.00px;width:57.60px;height:20.00px;"><span>480</span></div>
<div class="c ar " style="left:553.00px;top:496.00px;width:58.00px;height:20.00px;"><span>480</span></div>
<div class="c al " style="left:91.00px;top:517.00px;width:167.00px;height:20.00px;"><span>COURSE</span></div>
<div class="c ar " style="left:259.00px;top:517.00px;width:58.00px;height:20.00px;"><span>154°</span></div>
<div class="c ar " style="left:318.00px;top:517.00px;width:57.30px;height:20.00px;"><span>176°</span></div>
<div class="c ar " style="left:376.30px;top:517.00px;width:58.00px;height:20.00px;"><span>82°</span></div>
<div class="c ar " style="left:435.30px;top:517.00px;width:58.10px;height:20.00px;"><span>82°</span></div>
<div class="c ar " style="left:494.40px;top:517.00px;width:57.60px;height:20.00px;"><span>98°</span></div>
<div class="c ar " style="left:553.00px;top:517.00px;width:58.00px;height:20.00px;"><span>74°</span></div>
<div class="c al mid" style="left:91.00px;top:538.00px;width:167.00px;height:37.00px;"><span>TURN AoB</span></div>
<div class="dd" style="left:259px;top:538px;width:58px;height:37px">70° -<br>2.9G</div>
<svg class="abs" style="left:301.70px;top:554px" width="10" height="6" viewBox="0 0 10 6"><path d="M0.5 0.5h9L5 5.5z" fill="#8a8a8a"/></svg>
<div class="dd" style="left:318px;top:538px;width:57.30000000000001px;height:37px">70° -<br>2.9G</div>
<svg class="abs" style="left:360.00px;top:554px" width="10" height="6" viewBox="0 0 10 6"><path d="M0.5 0.5h9L5 5.5z" fill="#8a8a8a"/></svg>
<div class="dd" style="left:376.3px;top:538px;width:58.0px;height:37px">70° -<br>2.9G</div>
<svg class="abs" style="left:419.00px;top:554px" width="10" height="6" viewBox="0 0 10 6"><path d="M0.5 0.5h9L5 5.5z" fill="#8a8a8a"/></svg>
<div class="dd" style="left:435.3px;top:538px;width:58.099999999999966px;height:37px">70° -<br>2.9G</div>
<svg class="abs" style="left:478.10px;top:554px" width="10" height="6" viewBox="0 0 10 6"><path d="M0.5 0.5h9L5 5.5z" fill="#8a8a8a"/></svg>
<div class="dd" style="left:494.4px;top:538px;width:57.60000000000002px;height:37px">70° -<br>2.9G</div>
<svg class="abs" style="left:536.70px;top:554px" width="10" height="6" viewBox="0 0 10 6"><path d="M0.5 0.5h9L5 5.5z" fill="#8a8a8a"/></svg>
<div class="dd" style="left:553px;top:538px;width:58px;height:37px">70° -<br>2.9G</div>
<svg class="abs" style="left:595.70px;top:554px" width="10" height="6" viewBox="0 0 10 6"><path d="M0.5 0.5h9L5 5.5z" fill="#8a8a8a"/></svg>
<svg class="abs" style="left:655.20px;top:554px" width="10" height="6" viewBox="0 0 10 6"><path d="M0.5 0.5h9L5 5.5z" fill="#8a8a8a"/></svg>
<div class="c al " style="left:91.00px;top:576.00px;width:167.00px;height:20.00px;padding-bottom:2.500px;"><span>ALTITUDE</span></div>
<div class="c ar " style="left:259.00px;top:576.00px;width:58.00px;height:20.00px;padding-bottom:2.500px;"><span>10</span></div>
<div class="c ar " style="left:318.00px;top:576.00px;width:57.30px;height:20.00px;padding-bottom:2.500px;"><span>200</span></div>
<div class="c ar " style="left:376.30px;top:576.00px;width:58.00px;height:20.00px;padding-bottom:2.500px;"><span>600</span></div>
<div class="c ar " style="left:435.30px;top:576.00px;width:58.10px;height:20.00px;padding-bottom:2.500px;"><span>814</span></div>
<div class="c ar " style="left:494.40px;top:576.00px;width:57.60px;height:20.00px;padding-bottom:2.500px;"><span>1700</span></div>
<div class="c ar " style="left:553.00px;top:576.00px;width:58.00px;height:20.00px;padding-bottom:2.500px;"><span>50</span></div>
<div class="c al st" style="left:91.00px;top:597.00px;width:167.00px;height:20.00px;padding-bottom:2.500px;"><span>TEMP (OAT)</span></div>
<div class="c al " style="left:91.00px;top:639.00px;width:167.00px;height:20.00px;padding-bottom:2.500px;"><span>FUEL CONSUMP. [Σ ff/h]</span></div>
<div class="c ar " style="left:259.00px;top:639.00px;width:58.00px;height:20.00px;padding-bottom:2.500px;"><span>16000</span></div>
<div class="c ar " style="left:318.00px;top:639.00px;width:57.30px;height:20.00px;padding-bottom:2.500px;"><span>16000</span></div>
<div class="c ar " style="left:376.30px;top:639.00px;width:58.00px;height:20.00px;padding-bottom:2.500px;"><span>16000</span></div>
<div class="c ar " style="left:435.30px;top:639.00px;width:58.10px;height:20.00px;padding-bottom:2.500px;"><span>22000</span></div>
<div class="c ar " style="left:494.40px;top:639.00px;width:57.60px;height:20.00px;padding-bottom:2.500px;"><span>22000</span></div>
<div class="c ar " style="left:553.00px;top:639.00px;width:58.00px;height:20.00px;padding-bottom:2.500px;"><span>22000</span></div>
<div class="c al " style="left:91.00px;top:708.00px;width:167.00px;height:19.97px;padding-bottom:2.800px;"><span>[nm / minute]</span></div>
<div class="c ar " style="left:259.00px;top:708.00px;width:58.00px;height:19.97px;padding-bottom:2.800px;"><span>7.0</span></div>
<div class="c ar " style="left:318.00px;top:708.00px;width:57.30px;height:19.97px;padding-bottom:2.800px;"><span>7.0</span></div>
<div class="c ar " style="left:376.30px;top:708.00px;width:58.00px;height:19.97px;padding-bottom:2.800px;"><span>8.0</span></div>
<div class="c ar " style="left:435.30px;top:708.00px;width:58.10px;height:19.97px;padding-bottom:2.800px;"><span>8.0</span></div>
<div class="c ar " style="left:494.40px;top:708.00px;width:57.60px;height:19.97px;padding-bottom:2.800px;"><span>8.0</span></div>
<div class="c ar " style="left:553.00px;top:708.00px;width:58.00px;height:19.97px;padding-bottom:2.800px;"><span>8.0</span></div>
<div class="c al " style="left:91.00px;top:728.97px;width:167.00px;height:19.97px;padding-bottom:2.800px;"><span>[WCA]</span></div>
<div class="c ar " style="left:259.00px;top:728.97px;width:58.00px;height:19.97px;padding-bottom:2.800px;"><span>-1.1°</span></div>
<div class="c ar " style="left:318.00px;top:728.97px;width:57.30px;height:19.97px;padding-bottom:2.800px;"><span>-0.8°</span></div>
<div class="c ar " style="left:376.30px;top:728.97px;width:58.00px;height:19.97px;padding-bottom:2.800px;"><span>-0.9°</span></div>
<div class="c ar " style="left:435.30px;top:728.97px;width:58.10px;height:19.97px;padding-bottom:2.800px;"><span>-0.9°</span></div>
<div class="c ar " style="left:494.40px;top:728.97px;width:57.60px;height:19.97px;padding-bottom:2.800px;"><span>-1.1°</span></div>
<div class="c ar " style="left:553.00px;top:728.97px;width:58.00px;height:19.97px;padding-bottom:2.800px;"><span>-0.8°</span></div>
<div class="c al " style="left:91.00px;top:749.94px;width:167.00px;height:19.97px;padding-bottom:2.800px;"><span>[GS]</span></div>
<div class="c ar " style="left:259.00px;top:749.94px;width:58.00px;height:19.97px;padding-bottom:2.800px;"><span>425.5</span></div>
<div class="c ar " style="left:318.00px;top:749.94px;width:57.30px;height:19.97px;padding-bottom:2.800px;"><span>428.3</span></div>
<div class="c ar " style="left:376.30px;top:749.94px;width:58.00px;height:19.97px;padding-bottom:2.800px;"><span>473.8</span></div>
<div class="c ar " style="left:435.30px;top:749.94px;width:58.10px;height:19.97px;padding-bottom:2.800px;"><span>473.8</span></div>
<div class="c ar " style="left:494.40px;top:749.94px;width:57.60px;height:19.97px;padding-bottom:2.800px;"><span>476.1</span></div>
<div class="c ar " style="left:553.00px;top:749.94px;width:58.00px;height:19.97px;padding-bottom:2.800px;"><span>472.8</span></div>
<div class="c al " style="left:91.00px;top:770.91px;width:167.00px;height:19.97px;padding-bottom:2.800px;"><span>[ΔSPD]</span></div>
<div class="c ar " style="left:259.00px;top:770.91px;width:58.00px;height:19.97px;padding-bottom:2.800px;"><span>-5.5</span></div>
<div class="c ar " style="left:318.00px;top:770.91px;width:57.30px;height:19.97px;padding-bottom:2.800px;"><span>-8.3</span></div>
<div class="c ar " style="left:376.30px;top:770.91px;width:58.00px;height:19.97px;padding-bottom:2.800px;"><span>6.2</span></div>
<div class="c ar " style="left:435.30px;top:770.91px;width:58.10px;height:19.97px;padding-bottom:2.800px;"><span>6.2</span></div>
<div class="c ar " style="left:494.40px;top:770.91px;width:57.60px;height:19.97px;padding-bottom:2.800px;"><span>3.9</span></div>
<div class="c ar " style="left:553.00px;top:770.91px;width:58.00px;height:19.97px;padding-bottom:2.800px;"><span>7.2</span></div>
<div class="c al " style="left:91.00px;top:791.88px;width:167.00px;height:19.97px;padding-bottom:2.800px;"><span>[NEW_TAS]</span></div>
<div class="c ar " style="left:259.00px;top:791.88px;width:58.00px;height:19.97px;padding-bottom:2.800px;"><span>414</span></div>
<div class="c ar " style="left:318.00px;top:791.88px;width:57.30px;height:19.97px;padding-bottom:2.800px;"><span>412</span></div>
<div class="c ar " style="left:376.30px;top:791.88px;width:58.00px;height:19.97px;padding-bottom:2.800px;"><span>486</span></div>
<div class="c ar " style="left:435.30px;top:791.88px;width:58.10px;height:19.97px;padding-bottom:2.800px;"><span>486</span></div>
<div class="c ar " style="left:494.40px;top:791.88px;width:57.60px;height:19.97px;padding-bottom:2.800px;"><span>484</span></div>
<div class="c ar " style="left:553.00px;top:791.88px;width:58.00px;height:19.97px;padding-bottom:2.800px;"><span>487</span></div>
<div class="c al " style="left:91.00px;top:812.85px;width:167.00px;height:19.97px;padding-bottom:2.800px;"><span>[MACH_MSL]</span></div>
<div class="c ar " style="left:259.00px;top:812.85px;width:58.00px;height:19.97px;padding-bottom:2.800px;"><span>0.62</span></div>
<div class="c ar " style="left:318.00px;top:812.85px;width:57.30px;height:19.97px;padding-bottom:2.800px;"><span>0.62</span></div>
<div class="c ar " style="left:376.30px;top:812.85px;width:58.00px;height:19.97px;padding-bottom:2.800px;"><span>0.73</span></div>
<div class="c ar " style="left:435.30px;top:812.85px;width:58.10px;height:19.97px;padding-bottom:2.800px;"><span>0.73</span></div>
<div class="c ar " style="left:494.40px;top:812.85px;width:57.60px;height:19.97px;padding-bottom:2.800px;"><span>0.73</span></div>
<div class="c ar " style="left:553.00px;top:812.85px;width:58.00px;height:19.97px;padding-bottom:2.800px;"><span>0.73</span></div>
<div class="c al " style="left:91.00px;top:833.82px;width:167.00px;height:19.97px;padding-bottom:2.800px;"><span>[WCTH]</span></div>
<div class="c ar " style="left:259.00px;top:833.82px;width:58.00px;height:19.97px;padding-bottom:2.800px;"><span>153.1°</span></div>
<div class="c ar " style="left:318.00px;top:833.82px;width:57.30px;height:19.97px;padding-bottom:2.800px;"><span>175.5°</span></div>
<div class="c ar " style="left:376.30px;top:833.82px;width:58.00px;height:19.97px;padding-bottom:2.800px;"><span>81.1°</span></div>
<div class="c ar " style="left:435.30px;top:833.82px;width:58.10px;height:19.97px;padding-bottom:2.800px;"><span>81.2°</span></div>
<div class="c ar " style="left:494.40px;top:833.82px;width:57.60px;height:19.97px;padding-bottom:2.800px;"><span>96.8°</span></div>
<div class="c ar " style="left:553.00px;top:833.82px;width:58.00px;height:19.97px;padding-bottom:2.800px;"><span>73.5°</span></div>
<div class="c al " style="left:91.00px;top:854.79px;width:167.00px;height:19.97px;padding-bottom:2.800px;"><span>[WCMH]</span></div>
<div class="c ar bi" style="left:259.00px;top:854.79px;width:58.00px;height:19.97px;padding-bottom:2.800px;"><span>151.0°</span></div>
<div class="c ar bi" style="left:318.00px;top:854.79px;width:57.30px;height:19.97px;padding-bottom:2.800px;"><span>177.6°</span></div>
<div class="c ar bi" style="left:376.30px;top:854.79px;width:58.00px;height:19.97px;padding-bottom:2.800px;"><span>83.2°</span></div>
<div class="c ar bi" style="left:435.30px;top:854.79px;width:58.10px;height:19.97px;padding-bottom:2.800px;"><span>83.3°</span></div>
<div class="c ar bi" style="left:494.40px;top:854.79px;width:57.60px;height:19.97px;padding-bottom:2.800px;"><span>98.9°</span></div>
<div class="c ar bi" style="left:553.00px;top:854.79px;width:58.00px;height:19.97px;padding-bottom:2.800px;"><span>75.6°</span></div>
<div class="c al " style="left:91.00px;top:875.76px;width:167.00px;height:19.97px;padding-bottom:2.800px;"><span>[ΔCOURSE]</span></div>
<div class="c ar " style="left:259.00px;top:875.76px;width:58.00px;height:19.97px;padding-bottom:2.800px;"><span>22</span></div>
<div class="c ar " style="left:318.00px;top:875.76px;width:57.30px;height:19.97px;padding-bottom:2.800px;"><span>94</span></div>
<div class="c ar " style="left:376.30px;top:875.76px;width:58.00px;height:19.97px;padding-bottom:2.800px;"><span>0</span></div>
<div class="c ar " style="left:435.30px;top:875.76px;width:58.10px;height:19.97px;padding-bottom:2.800px;"><span>16</span></div>
<div class="c ar " style="left:494.40px;top:875.76px;width:57.60px;height:19.97px;padding-bottom:2.800px;"><span>24</span></div>
<div class="c al " style="left:91.00px;top:896.73px;width:167.00px;height:19.97px;padding-bottom:2.800px;"><span>[STRAIGHT_TIME]</span></div>
<div class="c ar " style="left:259.00px;top:896.73px;width:58.00px;height:19.97px;padding-bottom:2.800px;"><span>0:02:42</span></div>
<div class="c ar " style="left:318.00px;top:896.73px;width:57.30px;height:19.97px;padding-bottom:2.800px;"><span>0:03:19</span></div>
<div class="c ar " style="left:376.30px;top:896.73px;width:58.00px;height:19.97px;padding-bottom:2.800px;"><span>0:02:52</span></div>
<div class="c ar " style="left:435.30px;top:896.73px;width:58.10px;height:19.97px;padding-bottom:2.800px;"><span>0:01:00</span></div>
<div class="c ar " style="left:494.40px;top:896.73px;width:57.60px;height:19.97px;padding-bottom:2.800px;"><span>0:03:55</span></div>
<div class="c ar " style="left:553.00px;top:896.73px;width:58.00px;height:19.97px;padding-bottom:2.800px;"><span>0:04:02</span></div>
<div class="c al " style="left:91.00px;top:917.70px;width:167.00px;height:19.97px;padding-bottom:2.800px;"><span>[TURN_TIME]</span></div>
<div class="c ar " style="left:259.00px;top:917.70px;width:58.00px;height:19.97px;padding-bottom:2.800px;"><span>0:00:04</span></div>
<div class="c ar " style="left:318.00px;top:917.70px;width:57.30px;height:19.97px;padding-bottom:2.800px;"><span>0:00:13</span></div>
<div class="c ar " style="left:376.30px;top:917.70px;width:58.00px;height:19.97px;padding-bottom:2.800px;"><span>0:00:00</span></div>
<div class="c ar " style="left:435.30px;top:917.70px;width:58.10px;height:19.97px;padding-bottom:2.800px;"><span>0:00:03</span></div>
<div class="c ar " style="left:494.40px;top:917.70px;width:57.60px;height:19.97px;padding-bottom:2.800px;"><span>0:00:04</span></div>
<div class="c ar " style="left:553.00px;top:917.70px;width:58.00px;height:19.97px;padding-bottom:2.800px;"><span>0:00:00</span></div>
<div class="c al " style="left:91.00px;top:938.67px;width:167.00px;height:19.97px;padding-bottom:2.800px;"><span>[LEG_TIME_TOT_ACC]</span></div>
<div class="c ar " style="left:259.00px;top:938.67px;width:58.00px;height:19.97px;padding-bottom:2.800px;"><span>0:02:46</span></div>
<div class="c ar " style="left:318.00px;top:938.67px;width:57.30px;height:19.97px;padding-bottom:2.800px;"><span>0:03:32</span></div>
<div class="c ar " style="left:376.30px;top:938.67px;width:58.00px;height:19.97px;padding-bottom:2.800px;"><span>0:02:53</span></div>
<div class="c ar " style="left:435.30px;top:938.67px;width:58.10px;height:19.97px;padding-bottom:2.800px;"><span>0:01:03</span></div>
<div class="c ar " style="left:494.40px;top:938.67px;width:57.60px;height:19.97px;padding-bottom:2.800px;"><span>0:03:59</span></div>
<div class="c ar " style="left:553.00px;top:938.67px;width:58.00px;height:19.97px;padding-bottom:2.800px;"><span>0:04:02</span></div>
<div class="c al " style="left:91.00px;top:959.64px;width:167.00px;height:19.97px;padding-bottom:2.800px;"><span>[LEG_TIME_TOT]</span></div>
<div class="c ar " style="left:259.00px;top:959.64px;width:58.00px;height:19.97px;padding-bottom:2.800px;"><span>0:02:46</span></div>
<div class="c ar " style="left:318.00px;top:959.64px;width:57.30px;height:19.97px;padding-bottom:2.800px;"><span>0:03:32</span></div>
<div class="c ar " style="left:376.30px;top:959.64px;width:58.00px;height:19.97px;padding-bottom:2.800px;"><span>0:02:52</span></div>
<div class="c ar " style="left:435.30px;top:959.64px;width:58.10px;height:19.97px;padding-bottom:2.800px;"><span>0:01:03</span></div>
<div class="c ar " style="left:494.40px;top:959.64px;width:57.60px;height:19.97px;padding-bottom:2.800px;"><span>0:03:59</span></div>
<div class="c ar " style="left:553.00px;top:959.64px;width:58.00px;height:19.97px;padding-bottom:2.800px;"><span>0:04:02</span></div>
<div class="c al " style="left:91.00px;top:980.61px;width:167.00px;height:19.97px;padding-bottom:2.800px;"><span>[TIME_START]</span></div>
<div class="c ar " style="left:259.00px;top:980.61px;width:58.00px;height:19.97px;padding-bottom:2.800px;"><span>8:00:00</span></div>
<div class="c ar " style="left:318.00px;top:980.61px;width:57.30px;height:19.97px;padding-bottom:2.800px;"><span>8:02:46</span></div>
<div class="c ar " style="left:376.30px;top:980.61px;width:58.00px;height:19.97px;padding-bottom:2.800px;"><span>08:06:18</span></div>
<div class="c ar " style="left:435.30px;top:980.61px;width:58.10px;height:19.97px;padding-bottom:2.800px;"><span>08:09:11</span></div>
<div class="c ar " style="left:494.40px;top:980.61px;width:57.60px;height:19.97px;padding-bottom:2.800px;"><span>08:10:14</span></div>
<div class="c ar " style="left:553.00px;top:980.61px;width:58.00px;height:19.97px;padding-bottom:2.800px;"><span>08:14:13</span></div>
<div class="c al " style="left:91.00px;top:1001.58px;width:167.00px;height:19.97px;padding-bottom:2.800px;"><span>[TIME_END]</span></div>
<div class="c ar " style="left:259.00px;top:1001.58px;width:58.00px;height:19.97px;padding-bottom:2.800px;"><span>8:02:46</span></div>
<div class="c ar " style="left:318.00px;top:1001.58px;width:57.30px;height:19.97px;padding-bottom:2.800px;"><span>08:06:18</span></div>
<div class="c ar " style="left:376.30px;top:1001.58px;width:58.00px;height:19.97px;padding-bottom:2.800px;"><span>08:09:11</span></div>
<div class="c ar " style="left:435.30px;top:1001.58px;width:58.10px;height:19.97px;padding-bottom:2.800px;"><span>08:10:14</span></div>
<div class="c ar " style="left:494.40px;top:1001.58px;width:57.60px;height:19.97px;padding-bottom:2.800px;"><span>08:14:13</span></div>
<div class="c ar " style="left:553.00px;top:1001.58px;width:58.00px;height:19.97px;padding-bottom:2.800px;"><span>08:18:15</span></div>
<div class="c al st" style="left:91.00px;top:1022.55px;width:167.00px;height:19.97px;padding-bottom:2.800px;"><span>[DENSITY_ALT]</span></div>
<div class="c al " style="left:91.00px;top:1043.52px;width:167.00px;height:19.97px;padding-bottom:2.800px;"><span>[IAS]</span></div>
<div class="c ar " style="left:259.00px;top:1043.52px;width:58.00px;height:19.97px;padding-bottom:2.800px;"><span>413.94</span></div>
<div class="c ar " style="left:318.00px;top:1043.52px;width:57.30px;height:19.97px;padding-bottom:2.800px;"><span>410.76</span></div>
<div class="c ar " style="left:376.30px;top:1043.52px;width:58.00px;height:19.97px;padding-bottom:2.800px;"><span>481.63</span></div>
<div class="c ar " style="left:435.30px;top:1043.52px;width:58.10px;height:19.97px;padding-bottom:2.800px;"><span>480.07</span></div>
<div class="c ar " style="left:494.40px;top:1043.52px;width:57.60px;height:19.97px;padding-bottom:2.800px;"><span>471.66</span></div>
<div class="c ar " style="left:553.00px;top:1043.52px;width:58.00px;height:19.97px;padding-bottom:2.800px;"><span>486.63</span></div>
<div class="c al " style="left:91.00px;top:1064.49px;width:167.00px;height:19.97px;padding-bottom:2.800px;"><span>[FUEL/LEG]</span></div>
<div class="c ar " style="left:259.00px;top:1064.49px;width:58.00px;height:19.97px;padding-bottom:2.800px;"><span>738</span></div>
<div class="c ar " style="left:318.00px;top:1064.49px;width:57.30px;height:19.97px;padding-bottom:2.800px;"><span>942</span></div>
<div class="c ar " style="left:376.30px;top:1064.49px;width:58.00px;height:19.97px;padding-bottom:2.800px;"><span>769</span></div>
<div class="c ar " style="left:435.30px;top:1064.49px;width:58.10px;height:19.97px;padding-bottom:2.800px;"><span>385</span></div>
<div class="c ar " style="left:494.40px;top:1064.49px;width:57.60px;height:19.97px;padding-bottom:2.800px;"><span>1461</span></div>
<div class="c ar " style="left:553.00px;top:1064.49px;width:58.00px;height:19.97px;padding-bottom:2.800px;"><span>1479</span></div>
<div class="c al " style="left:91.00px;top:1085.46px;width:167.00px;height:19.97px;padding-bottom:2.800px;"><span>[FUEL/LEG Σ]</span></div>
<div class="c ar " style="left:259.00px;top:1085.46px;width:58.00px;height:19.97px;padding-bottom:2.800px;"><span>11262</span></div>
<div class="c ar " style="left:318.00px;top:1085.46px;width:57.30px;height:19.97px;padding-bottom:2.800px;"><span>10320</span></div>
<div class="c ar " style="left:376.30px;top:1085.46px;width:58.00px;height:19.97px;padding-bottom:2.800px;"><span>9551</span></div>
<div class="c ar " style="left:435.30px;top:1085.46px;width:58.10px;height:19.97px;padding-bottom:2.800px;"><span>9166</span></div>
<div class="c ar " style="left:494.40px;top:1085.46px;width:57.60px;height:19.97px;padding-bottom:2.800px;"><span>7706</span></div>
<div class="c ar " style="left:553.00px;top:1085.46px;width:58.00px;height:19.97px;padding-bottom:2.800px;"><span>6227</span></div>
<div class="c al " style="left:91.00px;top:1127.40px;width:167.00px;height:19.97px;padding-bottom:2.800px;"><span>[PARA_FACTOR]</span></div>
<div class="c ar " style="left:318.00px;top:1127.40px;width:57.30px;height:19.97px;padding-bottom:2.800px;"><span>7.0</span></div>
<div class="c ar " style="left:376.30px;top:1127.40px;width:58.00px;height:19.97px;padding-bottom:2.800px;"><span>7.0</span></div>
<div class="c ar " style="left:435.30px;top:1127.40px;width:58.10px;height:19.97px;padding-bottom:2.800px;"><span>7.0</span></div>
<div class="c ar " style="left:494.40px;top:1127.40px;width:57.60px;height:19.97px;padding-bottom:2.800px;"><span>7.0</span></div>
<div class="c ar " style="left:553.00px;top:1127.40px;width:58.00px;height:19.97px;padding-bottom:2.800px;"><span>7.0</span></div>
<div class="c al " style="left:91.00px;top:1148.37px;width:167.00px;height:19.97px;padding-bottom:2.800px;"><span>[NEW_AVG_GS]</span></div>
<div class="c ar " style="left:318.00px;top:1148.37px;width:57.30px;height:19.97px;padding-bottom:2.800px;"><span>426</span></div>
<div class="c ar " style="left:376.30px;top:1148.37px;width:58.00px;height:19.97px;padding-bottom:2.800px;"><span>458</span></div>
<div class="c ar " style="left:435.30px;top:1148.37px;width:58.10px;height:19.97px;padding-bottom:2.800px;"><span>474</span></div>
<div class="c ar " style="left:494.40px;top:1148.37px;width:57.60px;height:19.97px;padding-bottom:2.800px;"><span>474</span></div>
<div class="c ar " style="left:553.00px;top:1148.37px;width:58.00px;height:19.97px;padding-bottom:2.800px;"><span>476</span></div>
<div class="c al " style="left:91.00px;top:1169.34px;width:167.00px;height:19.97px;padding-bottom:2.800px;"><span>[T+]</span></div>
<div class="c ar " style="left:318.00px;top:1169.34px;width:57.30px;height:19.97px;padding-bottom:2.800px;"><span>0:00:00</span></div>
<div class="c ar " style="left:376.30px;top:1169.34px;width:58.00px;height:19.97px;padding-bottom:2.800px;"><span>0:00:09</span></div>
<div class="c ar " style="left:435.30px;top:1169.34px;width:58.10px;height:19.97px;padding-bottom:2.800px;"><span>0:00:00</span></div>
<div class="c ar " style="left:494.40px;top:1169.34px;width:57.60px;height:19.97px;padding-bottom:2.800px;"><span>0:00:00</span></div>
<div class="c ar " style="left:553.00px;top:1169.34px;width:58.00px;height:19.97px;padding-bottom:2.800px;"><span>0:00:00</span></div>
<div class="c al " style="left:91.00px;top:1190.31px;width:167.00px;height:19.97px;padding-bottom:2.800px;"><span>[DIST_AVG_GS]</span></div>
<div class="c ar " style="left:318.00px;top:1190.31px;width:57.30px;height:19.97px;padding-bottom:2.800px;"><span>0.00</span></div>
<div class="c ar " style="left:376.30px;top:1190.31px;width:58.00px;height:19.97px;padding-bottom:2.800px;"><span>1.09</span></div>
<div class="c ar " style="left:435.30px;top:1190.31px;width:58.10px;height:19.97px;padding-bottom:2.800px;"><span>0.00</span></div>
<div class="c ar " style="left:494.40px;top:1190.31px;width:57.60px;height:19.97px;padding-bottom:2.800px;"><span>0.00</span></div>
<div class="c ar " style="left:553.00px;top:1190.31px;width:58.00px;height:19.97px;padding-bottom:2.800px;"><span>0.00</span></div>
<div class="c al " style="left:91.00px;top:1211.28px;width:167.00px;height:19.97px;padding-bottom:2.800px;"><span>[NEW_DIST_STRGT]</span></div>
<div class="c ar " style="left:318.00px;top:1211.28px;width:57.30px;height:19.97px;padding-bottom:2.800px;"><span>0:03:19</span></div>
<div class="c ar " style="left:376.30px;top:1211.28px;width:58.00px;height:19.97px;padding-bottom:2.800px;"><span>0:02:44</span></div>
<div class="c ar " style="left:435.30px;top:1211.28px;width:58.10px;height:19.97px;padding-bottom:2.800px;"><span>0:01:00</span></div>
<div class="c ar " style="left:494.40px;top:1211.28px;width:57.60px;height:19.97px;padding-bottom:2.800px;"><span>0:03:55</span></div>
<div class="c ar " style="left:553.00px;top:1211.28px;width:58.00px;height:19.97px;padding-bottom:2.800px;"><span>0:04:02</span></div>
<div class="c al " style="left:91.00px;top:1232.25px;width:167.00px;height:19.97px;padding-bottom:2.800px;"><span>[NEW_TOT]</span></div>
<div class="c ar " style="left:259.00px;top:1232.25px;width:58.00px;height:19.97px;padding-bottom:2.800px;"><span>0:02:46</span></div>
<div class="c ar " style="left:318.00px;top:1232.25px;width:57.30px;height:19.97px;padding-bottom:2.800px;"><span>0:03:32</span></div>
<div class="c ar " style="left:376.30px;top:1232.25px;width:58.00px;height:19.97px;padding-bottom:2.800px;"><span>0:02:53</span></div>
<div class="c ar " style="left:435.30px;top:1232.25px;width:58.10px;height:19.97px;padding-bottom:2.800px;"><span>0:01:03</span></div>
<div class="c ar " style="left:494.40px;top:1232.25px;width:57.60px;height:19.97px;padding-bottom:2.800px;"><span>0:03:59</span></div>
<div class="c ar " style="left:553.00px;top:1232.25px;width:58.00px;height:19.97px;padding-bottom:2.800px;"><span>0:04:02</span></div>
<div class="r" style="left:69.00px;top:433.00px;width:21.00px;height:62.00px;background:#000;"></div>
<div class="rot" style="left:70.10px;top:433.90px;width:21.00px;height:62.00px"><span>DIST</span></div>
<div class="r" style="left:69.00px;top:576.00px;width:21.00px;height:41.00px;background:#000;"></div>
<div class="rot" style="left:70.10px;top:576.90px;width:21.00px;height:41.00px"><span>IAS</span></div>
<div class="r" style="left:69.00px;top:1127.40px;width:21.00px;height:122.60px;background:#000;"></div>
<div class="rot" style="left:70.10px;top:1128.30px;width:21.00px;height:145.79px"><span>[ACC]</span></div>
<div class="r" style="left:68.00px;top:432.00px;width:661.60px;height:1.00px;background:#e8e8e8;"></div>
<div class="r" style="left:90.00px;top:474.00px;width:639.60px;height:1.00px;background:#e8e8e8;"></div>
<div class="r" style="left:68.00px;top:495.00px;width:661.60px;height:1.00px;background:#e8e8e8;"></div>
<div class="r" style="left:68.00px;top:432.00px;width:1.00px;height:64.00px;background:#e8e8e8;"></div>
<div class="r" style="left:90.00px;top:432.00px;width:1.00px;height:64.00px;background:#e8e8e8;"></div>
<div class="r" style="left:68.00px;top:575.00px;width:661.60px;height:1.00px;background:#e8e8e8;"></div>
<div class="r" style="left:68.00px;top:617.00px;width:661.60px;height:1.00px;background:#e8e8e8;"></div>
<div class="r" style="left:68.00px;top:575.00px;width:1.00px;height:43.00px;background:#e8e8e8;"></div>
<div class="r" style="left:90.00px;top:575.00px;width:1.00px;height:43.00px;background:#e8e8e8;"></div>
<div class="r" style="left:68.00px;top:1126.40px;width:661.60px;height:1.00px;background:#e8e8e8;"></div>
<div class="r" style="left:68.00px;top:1126.40px;width:1.00px;height:123.60px;background:#e8e8e8;"></div>
<div class="r" style="left:90.00px;top:1126.40px;width:1.00px;height:123.60px;background:#e8e8e8;"></div>
<div class="c al b" style="left:758.40px;top:163.00px;width:322.10px;height:20.00px;"><span><span class="g">▼</span> HELP IN HIDDEN COLUMN &quot;M&quot;</span></div>
<div class="c ac mid2" style="left:960.00px;top:184.00px;width:60.00px;height:26.00px;"><span>px</span></div>
<div class="c ac " style="left:960.00px;top:274.00px;width:60.00px;height:20.00px;"><span>nm</span></div>
<div class="c ac " style="left:960.00px;top:343.00px;width:60.00px;height:20.00px;"><span>px</span></div>
<div class="c ar " style="left:758.40px;top:211.00px;width:200.60px;height:20.00px;"><span>px to nm <span class="g2">►</span></span></div>
<div class="c ar " style="left:960.00px;top:211.00px;width:60.00px;height:20.00px;"><span>1068</span></div>
<div class="c ar " style="left:1021.00px;top:211.00px;width:59.50px;height:20.00px;"><span>32.04</span></div>
<div class="c al " style="left:1081.50px;top:211.00px;width:98.50px;height:20.00px;"><span>nm</span></div>
<div class="r" style="left:959.00px;top:210.00px;width:62.00px;height:1.00px;background:#e8e8e8;"></div>
<div class="r" style="left:959.00px;top:231.00px;width:62.00px;height:1.00px;background:#e8e8e8;"></div>
<div class="r" style="left:959.00px;top:210.00px;width:1.00px;height:22.00px;background:#e8e8e8;"></div>
<div class="r" style="left:1020.00px;top:210.00px;width:1.00px;height:22.00px;background:#e8e8e8;"></div>
<div class="c ar mid2" style="left:758.40px;top:295.00px;width:200.60px;height:26.00px;"><span>nm to px <span class="g2">►</span></span></div>
<div class="c ar mid2" style="left:960.00px;top:295.00px;width:60.00px;height:26.00px;"><span>9</span></div>
<div class="c ar mid2" style="left:1021.00px;top:295.00px;width:59.50px;height:26.00px;"><span>300.01</span></div>
<div class="c al mid2" style="left:1081.50px;top:295.00px;width:98.50px;height:26.00px;"><span>px</span></div>
<div class="r" style="left:959.00px;top:294.00px;width:62.00px;height:1.00px;background:#e8e8e8;"></div>
<div class="r" style="left:959.00px;top:321.00px;width:62.00px;height:1.00px;background:#e8e8e8;"></div>
<div class="r" style="left:959.00px;top:294.00px;width:1.00px;height:28.00px;background:#e8e8e8;"></div>
<div class="r" style="left:1020.00px;top:294.00px;width:1.00px;height:28.00px;background:#e8e8e8;"></div>
<div class="c ar " style="left:758.40px;top:364.00px;width:200.60px;height:20.00px;"><span>px to time <span class="g2">►</span></span></div>
<div class="c ar " style="left:960.00px;top:364.00px;width:60.00px;height:20.00px;"><span>420</span></div>
<div class="c ar " style="left:1021.00px;top:364.00px;width:59.50px;height:20.00px;"><span>100.80</span></div>
<div class="c al " style="left:1081.50px;top:364.00px;width:98.50px;height:20.00px;"><span>s</span></div>
<div class="r" style="left:959.00px;top:363.00px;width:62.00px;height:1.00px;background:#e8e8e8;"></div>
<div class="r" style="left:959.00px;top:384.00px;width:62.00px;height:1.00px;background:#e8e8e8;"></div>
<div class="r" style="left:959.00px;top:363.00px;width:1.00px;height:22.00px;background:#e8e8e8;"></div>
<div class="r" style="left:1020.00px;top:363.00px;width:1.00px;height:22.00px;background:#e8e8e8;"></div>
<div class="c ar " style="left:758.40px;top:385.00px;width:200.60px;height:20.00px;"><span>TAS <span class="g2">►</span></span></div>
<div class="c ar " style="left:960.00px;top:385.00px;width:60.00px;height:20.00px;"><span>480</span></div>
<div class="c ar " style="left:1021.00px;top:385.00px;width:59.50px;height:20.00px;"><span>0:01:41</span></div>
<div class="c al " style="left:1081.50px;top:385.00px;width:98.50px;height:20.00px;"><span>t</span></div>
<div class="r" style="left:959.00px;top:384.00px;width:62.00px;height:1.00px;background:#e8e8e8;"></div>
<div class="r" style="left:959.00px;top:405.00px;width:62.00px;height:1.00px;background:#e8e8e8;"></div>
<div class="r" style="left:959.00px;top:384.00px;width:1.00px;height:22.00px;background:#e8e8e8;"></div>
<div class="r" style="left:1020.00px;top:384.00px;width:1.00px;height:22.00px;background:#e8e8e8;"></div>
<div class="c ar " style="left:758.40px;top:433.00px;width:200.60px;height:20.00px;"><span>ΔHDG to time <span class="g2">►</span></span></div>
<div class="c ar " style="left:960.00px;top:433.00px;width:60.00px;height:20.00px;"><span>43°</span></div>
<div class="c ar " style="left:1021.00px;top:433.00px;width:59.50px;height:20.00px;"><span>0:00:07</span></div>
<div class="c al " style="left:1081.50px;top:433.00px;width:98.50px;height:20.00px;"><span>t</span></div>
<div class="r" style="left:959.00px;top:432.00px;width:62.00px;height:1.00px;background:#e8e8e8;"></div>
<div class="r" style="left:959.00px;top:453.00px;width:62.00px;height:1.00px;background:#e8e8e8;"></div>
<div class="r" style="left:959.00px;top:432.00px;width:1.00px;height:22.00px;background:#e8e8e8;"></div>
<div class="r" style="left:1020.00px;top:432.00px;width:1.00px;height:22.00px;background:#e8e8e8;"></div>
<div class="c ar " style="left:758.40px;top:454.00px;width:200.60px;height:20.00px;"><span>AoB <span class="g2">►</span></span></div>
<div class="c ar " style="left:960.00px;top:454.00px;width:60.00px;height:20.00px;"><span>70°</span></div>
<div class="c ar " style="left:1021.00px;top:454.00px;width:59.50px;height:20.00px;"><span>2.9</span></div>
<div class="c al " style="left:1081.50px;top:454.00px;width:98.50px;height:20.00px;"><span>G</span></div>
<div class="r" style="left:959.00px;top:453.00px;width:62.00px;height:1.00px;background:#e8e8e8;"></div>
<div class="r" style="left:959.00px;top:474.00px;width:62.00px;height:1.00px;background:#e8e8e8;"></div>
<div class="r" style="left:959.00px;top:453.00px;width:1.00px;height:22.00px;background:#e8e8e8;"></div>
<div class="r" style="left:1020.00px;top:453.00px;width:1.00px;height:22.00px;background:#e8e8e8;"></div>
<div class="c ar " style="left:758.40px;top:475.00px;width:200.60px;height:20.00px;"><span>TAS <span class="g2">►</span></span></div>
<div class="c ar " style="left:960.00px;top:475.00px;width:60.00px;height:20.00px;"><span>480</span></div>
<div class="r" style="left:959.00px;top:474.00px;width:62.00px;height:1.00px;background:#e8e8e8;"></div>
<div class="r" style="left:959.00px;top:495.00px;width:62.00px;height:1.00px;background:#e8e8e8;"></div>
<div class="r" style="left:959.00px;top:474.00px;width:1.00px;height:22.00px;background:#e8e8e8;"></div>
<div class="r" style="left:1020.00px;top:474.00px;width:1.00px;height:22.00px;background:#e8e8e8;"></div>
</div>
<div id="hs"></div>
<div style="left:0;top:1250px;width:46.500px;height:16px;background:#0b0b0b"></div>
<div style="left:47px;top:1250px;width:17px;height:16px;background:#1b1b1b"></div>
<svg style="left:51.500px;top:1253.200px" width="8" height="10" viewBox="0 0 8 10"><path d="M6.500 1L2 5 6.500 9" stroke="#e6e6e6" stroke-width="1.700" fill="none"/></svg>
<div style="left:64px;top:1250px;width:905px;height:16px;background:#353535"></div>
<div id="bot"></div>
<div style="left:57px;top:1286.200px;width:10.600px;height:1.600px;background:#c6c9c7"></div><div style="left:61.500px;top:1281.700px;width:1.600px;height:10.600px;background:#c6c9c7"></div>
<div style="left:95.500px;top:1282.70px;width:14.500px;height:1.600px;background:#c6c9c7"></div>
<div style="left:95.500px;top:1286.90px;width:14.500px;height:1.600px;background:#c6c9c7"></div>
<div style="left:95.500px;top:1291.10px;width:14.500px;height:1.600px;background:#c6c9c7"></div>
<div style="left:135.500px;top:1268px;width:136px;height:37px;background:#0f1b2e"></div>
<div class="tab" style="left:147px;color:#5e9ef5;letter-spacing:0.550px"><span>DR Plan Data</span></div>
<svg style="left:251.30px;top:1285.50px" width="8" height="4" viewBox="0 0 10 5"><path d="M0 0h10L5 5z" fill="#5b9bf3"/></svg>
<div class="tab" style="left:284.4px"><span>Target</span></div>
<svg style="left:338.00px;top:1285.50px" width="8" height="4" viewBox="0 0 10 5"><path d="M0 0h10L5 5z" fill="#c6c9c7"/></svg>
<div class="tab" style="left:371.5px"><span>DR Plan Export</span></div>
<svg style="left:486.50px;top:1285.50px" width="8" height="4" viewBox="0 0 10 5"><path d="M0 0h10L5 5z" fill="#c6c9c7"/></svg>
<div class="tab" style="left:519.5px"><span>MAP Tools</span></div>
<svg style="left:602.00px;top:1285.50px" width="8" height="4" viewBox="0 0 10 5"><path d="M0 0h10L5 5z" fill="#c6c9c7"/></svg>
<div class="tab" style="left:635.4px"><span>Fuel Notes</span></div>
<svg style="left:719.70px;top:1285.50px" width="8" height="4" viewBox="0 0 10 5"><path d="M0 0h10L5 5z" fill="#c6c9c7"/></svg>
<div id="lb"></div><div id="bb"></div>
</div>
</body></html>
